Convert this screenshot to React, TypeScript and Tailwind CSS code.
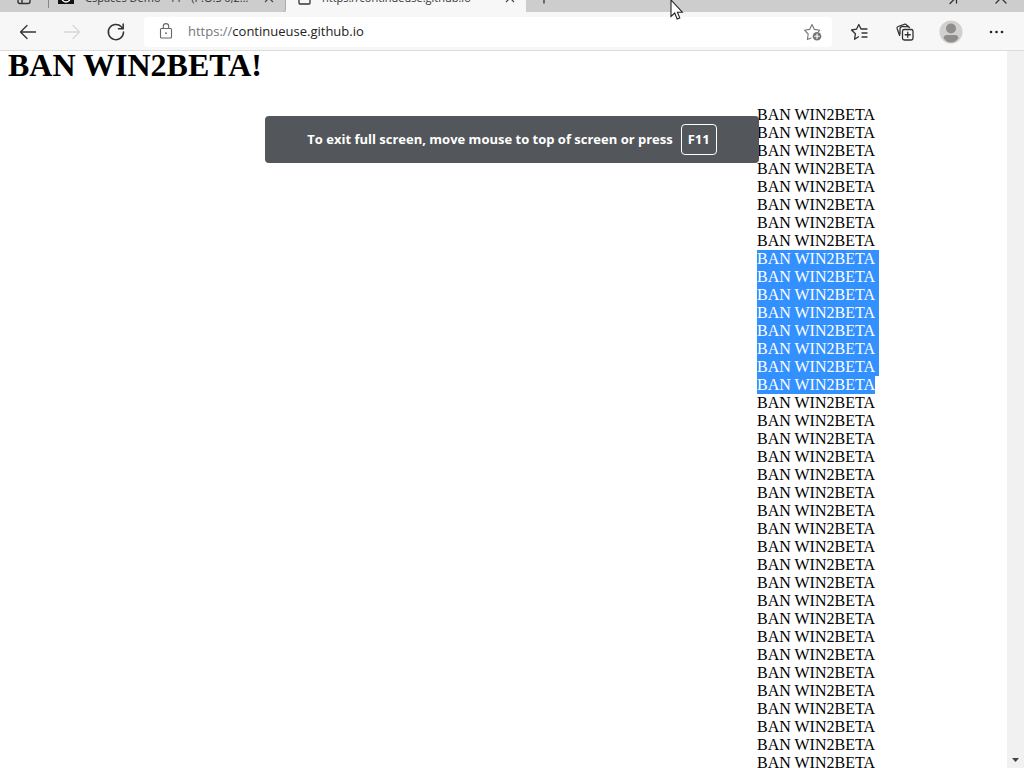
import type { ReactNode } from "react";
import { clsx } from "clsx";

const ROWS = 37;
const SELECTED_FROM = 8;
const SELECTED_TO = 15;

const IconButton = ({
  label,
  className = "w-11",
  children,
}: {
  label: string;
  className?: string;
  children: ReactNode;
}) => (
  <button
    type="button"
    aria-label={label}
    className={clsx("flex h-7 shrink-0 items-center justify-center", className)}
  >
    {children}
  </button>
);

const strokeProps = {
  width: 20,
  height: 20,
  viewBox: "0 0 20 20",
  fill: "none",
  stroke: "currentColor",
  strokeWidth: 1.3,
  strokeLinecap: "round",
  strokeLinejoin: "round",
} as const;

const ArrowIcon = ({ flip }: { flip?: boolean }) => (
  <svg {...strokeProps}>
    <path d={flip ? "M2.5 10H17.5M11 3.5L17.5 10L11 16.5" : "M17.5 10H2.5M9 3.5L2.5 10L9 16.5"} />
  </svg>
);

const ReloadIcon = () => (
  <svg {...strokeProps} strokeWidth={1.5}>
    <path d="M17.5 10A7.6 7.6 0 1 1 15.3 4.7L17 6.5" />
    <path d="M17.2 2V6.7H12.5" />
  </svg>
);

const LockIcon = () => (
  <svg {...strokeProps} strokeWidth={1.1}>
    <rect x="4.5" y="6.5" width="11" height="9.5" rx="1" />
    <path d="M7.3 6.5V4.3A2.7 2.7 0 0 1 12.7 4.3V6.5" />
    <circle cx="10" cy="11.2" r="0.9" fill="currentColor" stroke="none" />
  </svg>
);

const AddFavoriteIcon = () => (
  <svg {...strokeProps} strokeWidth={1.1}>
    <path d="M9 16L5.4 17.6L6.2 12L2.5 8.2L7.6 7.4L10 2.5L12.4 7.4L17.7 8.2L16.5 9.6" />
    <circle cx="15" cy="14.2" r="4.3" fill="currentColor" stroke="none" />
    <path d="M15 12V16.4M12.8 14.2H17.2" stroke="#fff" />
  </svg>
);

const FavoritesIcon = () => (
  <svg {...strokeProps}>
    <path d="M9.5 14.8L5.6 17.2L6.4 11.8L2.5 8L7.5 7.2L9.8 2.5L12 7H18M13 11H18M13 15H18" />
  </svg>
);

const CollectionsIcon = () => (
  <svg {...strokeProps}>
    <rect x="7.5" y="7.5" width="10.5" height="10.5" rx="1.8" />
    <path d="M12.75 10.2V15.3M10.2 12.75H15.3" />
    <path d="M4.6 13.5L2.1 6.5Q1.700 5 3.100 4.500L9.300 2.300Q10.800 1.900 11.500 3L13.800 4.800M5 12V7Q5 4.700 7.300 4.700H12.500Q14.300 4.700 14.500 5.700" />
  </svg>
);

const AvatarIcon = () => (
  <svg width="24" height="24" viewBox="0 0 24 24">
    <circle cx="12" cy="12" r="11.5" fill="#d2d0ce" />
    <circle cx="12" cy="8.5" r="5" fill="#8f8d8b" />
    <path
      d="M4.5 18Q5 15 8 15H16Q19 15 19.5 18Q16.5 22.5 12 22.5Q7.5 22.5 4.5 18Z"
      fill="#8f8d8b"
    />
  </svg>
);

const TabClose = () => (
  <button type="button" aria-label="Close tab">
    <svg width="16" height="16" viewBox="0 0 16 16" stroke="#444" strokeWidth="1.2">
      <path d="M4 4L12 12M12 4L4 12" />
    </svg>
  </button>
);

const TabTitle = ({ children }: { children: ReactNode }) => (
  <span className="min-w-0 flex-1 overflow-hidden text-[11px] leading-4 whitespace-nowrap">
    {children}
  </span>
);

// Only the lower edge of the tabs shows while the bar slides into view.
const TabStrip = () => (
  <div className="flex h-3 shrink-0 items-end overflow-hidden bg-[#cdcdcd] text-[#333]">
    <div className="flex h-7 w-12 shrink-0 items-center justify-center">
      <svg {...strokeProps} strokeWidth={1.4}>
        <rect x="4" y="2" width="12" height="13.5" rx="2" />
        <path d="M4 6H16M8 6V15" />
      </svg>
    </div>
    <div className="mb-1 h-5 w-px bg-[#888]" />
    <div className="flex h-7 w-[237px] shrink-0 items-center gap-2.5 rounded-b-sm border-r border-[#aaa] px-2">
      <svg width="18" height="18" viewBox="0 0 18 18">
        <rect x="1" width="16" height="15" fill="#111" />
        <circle cx="9" cy="9" r="4" fill="none" stroke="#fff" strokeWidth="1.5" />
      </svg>
      <TabTitle>Cspaces Demo - YT - (P.O.S 0,2...</TabTitle>
      <TabClose />
    </div>
    <div className="flex h-7 w-60 shrink-0 items-center gap-2.5 bg-[#f7f7f7] pr-2 pl-3">
      <svg width="14" height="16" viewBox="0 0 14 16" fill="none" stroke="#333" strokeWidth="1.3">
        <rect x="1" y="1" width="11" height="13" rx="1" />
      </svg>
      <TabTitle>https://continueuse.github.io</TabTitle>
      <TabClose />
    </div>
    <IconButton label="New tab" className="w-9">
      <svg {...strokeProps}>
        <path d="M10 2V15M3 8H17" />
      </svg>
    </IconButton>
    <div className="flex-1" />
    <IconButton label="Exit full screen" className="w-12">
      <svg {...strokeProps}>
        <path d="M6 15.5L12 9.5M7 10H12.5V15" />
      </svg>
    </IconButton>
    <IconButton label="Close" className="w-[46px]">
      <svg {...strokeProps}>
        <path d="M5 5L15 15M15 5L5 15" />
      </svg>
    </IconButton>
  </div>
);

const Toolbar = () => (
  <div className="flex h-[39px] shrink-0 items-center border-b border-[#dcdcdc] bg-[#f7f7f7] pt-px pr-1 pl-1.5 text-[#333]">
    <IconButton label="Back">
      <ArrowIcon />
    </IconButton>
    <IconButton label="Forward" className="w-11 text-[#d8d8d8]">
      <ArrowIcon flip />
    </IconButton>
    <IconButton label="Refresh">
      <ReloadIcon />
    </IconButton>
    <div className="ml-1.5 flex h-[30px] min-w-0 flex-1 items-center rounded-sm bg-white pl-3 text-[13px] text-[#222]">
      <span className="text-[#666]">
        <LockIcon />
      </span>
      <label htmlFor="address" className="ml-3 text-[#767676]">
        https://
      </label>
      <input
        id="address"
        defaultValue="continueuse.github.io"
        className="min-w-0 flex-1 bg-transparent outline-none"
      />
      <IconButton label="Add to favorites" className="w-10 text-[#767676]">
        <AddFavoriteIcon />
      </IconButton>
    </div>
    <div className="flex pl-1">
      <IconButton label="Favorites" className="w-[46px]">
        <FavoritesIcon />
      </IconButton>
      <IconButton label="Collections" className="w-[46px]">
        <CollectionsIcon />
      </IconButton>
      <IconButton label="Profile" className="w-[46px]">
        <AvatarIcon />
      </IconButton>
      <IconButton label="Settings and more" className="w-[46px]">
        <svg width="20" height="20" viewBox="0 0 20 20" fill="#222">
          <circle cx="4" cy="10" r="1.3" />
          <circle cx="9.5" cy="10" r="1.3" />
          <circle cx="15" cy="10" r="1.3" />
        </svg>
      </IconButton>
    </div>
  </div>
);

const FullScreenHint = () => (
  <div className="absolute inset-x-0 top-[116px] flex justify-center">
    <div className="flex h-[47px] items-center gap-2 rounded-sm bg-[#53565a] px-[42px] text-[13px] font-bold whitespace-nowrap text-white">
      To exit full screen, move mouse to top of screen or press
      <kbd className="flex h-[31px] w-9 items-center justify-center rounded-sm border border-white font-['Open_Sans',sans-serif] text-[13px]">
        F11
      </kbd>
    </div>
  </div>
);

const Cursor = () => (
  <svg className="absolute top-0 left-[670px]" width="14" height="20" viewBox="0 0 14 20">
    <path
      d="M1 0V16.5L4.7 13L7.2 19L9.8 17.9L7.4 12.2H12.3Z"
      fill="#fff"
      stroke="#222"
      strokeWidth="1.1"
    />
  </svg>
);

const Page = () => (
  <main className="min-w-0 flex-1 overflow-hidden bg-white font-['Liberation_Serif',serif] text-black">
    <h1 className="pl-2 text-[32px] leading-7 font-bold">BAN WIN2BETA!</h1>
    <div className="flex justify-end pt-[27px] pr-32">
      <div className="w-[122px] text-base leading-[18px]">
        {Array.from({ length: ROWS }, (_, i) => (
          <p
            key={i}
            className={clsx(
              i >= SELECTED_FROM && i <= SELECTED_TO && "bg-[#3390ff] text-white",
              i === SELECTED_TO && "w-[118px]",
            )}
          >
            BAN WIN2BETA
          </p>
        ))}
      </div>
    </div>
  </main>
);

export default function App() {
  return (
    <div className="relative flex h-screen flex-col overflow-hidden font-['Open_Sans',sans-serif]">
      <TabStrip />
      <Toolbar />
      <div className="flex min-h-0 flex-1">
        <Page />
        <div className="flex w-[17px] shrink-0 items-end justify-center bg-[#f1f1f1] pb-1.5">
          <svg width="7" height="4" viewBox="0 0 7 4" fill="#444">
            <path d="M0 0H7L3.5 4Z" />
          </svg>
        </div>
      </div>
      <FullScreenHint />
      <Cursor />
    </div>
  );
}
